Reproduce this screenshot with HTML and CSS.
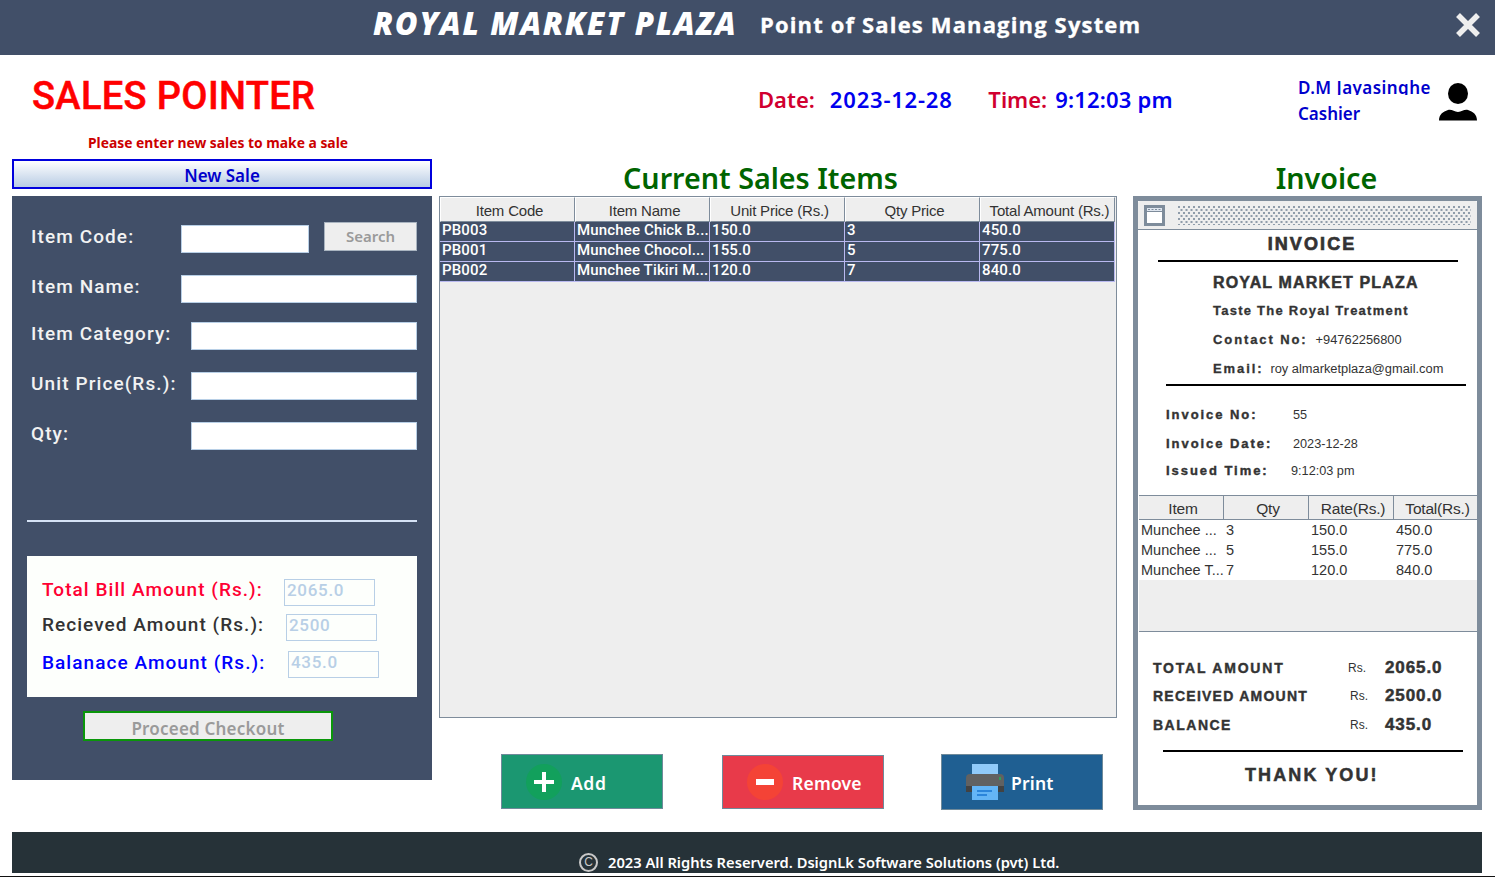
FILE: index.html
```html
<!DOCTYPE html>
<html lang="en">
<head>
<meta charset="utf-8">
<title>Royal Market Plaza</title>
<link rel="stylesheet" href="styles.css">
</head>
<body>
<div class="app">
  <header class="titlebar">
    <span class="brand">ROYAL MARKET PLAZA</span>
    <span class="subtitle">Point of Sales Managing System</span>
    <svg class="close" width="26" height="26" viewBox="0 0 26 26"><path d="M3 3L23 23M23 3L3 23" stroke="#eeeeee" stroke-width="5.5" fill="none"/></svg>
  </header>

  <section class="topbar">
    <h1 class="page-title">SALES POINTER</h1>
    <div class="clock">
      <span class="clock-label">Date:</span><span class="clock-date">2023-12-28</span>
      <span class="clock-label clock-time-label">Time:</span><span class="clock-time">9:12:03 pm</span>
    </div>
    <div class="user">
      <div class="user-text">
        <div class="user-name">D.M Jayasinghe</div>
        <div class="user-role">Cashier</div>
      </div>
      <svg class="user-icon" width="40" height="40" viewBox="0 0 40 40"><ellipse cx="20" cy="11.500" rx="10" ry="10.500" fill="#000"/><path d="M1 38.500c0-6 4-9 9-10.500 4-1 6 2 10 2s6-3 10-2c5 1.500 9 4.500 9 10.500z" fill="#000"/></svg>
    </div>
  </section>

  <main class="workspace">
    <section class="left">
      <p class="prompt">Please enter new sales to make a sale</p>
      <button class="new-sale">New Sale</button>
      <div class="panel">
        <div class="row row-code"><label class="lbl lbl-short">Item Code:</label><span class="field field-code"></span><button class="search">Search</button></div>
        <div class="row row-name"><label class="lbl lbl-short">Item Name:</label><span class="field field-grow"></span></div>
        <div class="row row-cat"><label class="lbl lbl-long">Item Category:</label><span class="field field-grow"></span></div>
        <div class="row row-price"><label class="lbl lbl-long">Unit Price(Rs.):</label><span class="field field-grow"></span></div>
        <div class="row row-qty"><label class="lbl lbl-long">Qty:</label><span class="field field-grow"></span></div>
        <hr class="divider">
        <div class="totals">
          <div class="total total-bill"><span class="total-lbl red">Total Bill Amount (Rs.):</span><span class="total-val">2065.0</span></div>
          <div class="total total-recv"><span class="total-lbl dark">Recieved Amount (Rs.):</span><span class="total-val">2500</span></div>
          <div class="total total-bal"><span class="total-lbl blue">Balanace Amount (Rs.):</span><span class="total-val">435.0</span></div>
        </div>
        <button class="checkout">Proceed Checkout</button>
      </div>
    </section>

    <section class="center">
      <h2 class="heading">Current Sales Items</h2>
      <div class="table-box">
        <table class="sales">
          <thead><tr><th>Item Code</th><th>Item Name</th><th>Unit Price (Rs.)</th><th>Qty Price</th><th>Total Amount (Rs.)</th></tr></thead>
          <tbody>
            <tr><td>PB003</td><td>Munchee Chick B...</td><td>150.0</td><td>3</td><td>450.0</td></tr>
            <tr><td>PB001</td><td>Munchee Chocol...</td><td>155.0</td><td>5</td><td>775.0</td></tr>
            <tr><td>PB002</td><td>Munchee Tikiri M...</td><td>120.0</td><td>7</td><td>840.0</td></tr>
          </tbody>
        </table>
      </div>
      <div class="actions">
        <button class="action add">
          <svg width="36" height="36" viewBox="0 0 36 36"><circle cx="18" cy="18" r="18" fill="#12a05c"/><path d="M18 8V28M8 18H28" stroke="#fff" stroke-width="4"/></svg>
          <span>Add</span>
        </button>
        <button class="action remove">
          <svg width="36" height="36" viewBox="0 0 36 36"><circle cx="18" cy="18" r="18" fill="#f44336"/><rect x="9" y="15" width="18" height="6" fill="#fff"/></svg>
          <span>Remove</span>
        </button>
        <button class="action print">
          <svg width="38" height="36" viewBox="0 0 38 36"><rect x="6" y="0" width="26" height="12" fill="#90caf9"/><path d="M0 14a4 4 0 0 1 4-4h30a4 4 0 0 1 4 4v14H0z" fill="#616161"/><rect x="0" y="22" width="38" height="6" fill="#424242"/><rect x="33" y="13" width="2" height="3" fill="#2e9e5b"/><rect x="6" y="22" width="26" height="14" fill="#64b5f6"/><path d="M11 27H26M11 31H21" stroke="#1976d2" stroke-width="1.500"/></svg>
          <span>Print</span>
        </button>
      </div>
    </section>

    <section class="right">
      <h2 class="heading">Invoice</h2>
      <div class="invoice">
        <div class="win-bar">
          <svg class="win-icon" width="21" height="21" viewBox="0 0 21 21"><rect x="1.500" y="1.500" width="18" height="18" fill="#fff" stroke="#7e8c9b" stroke-width="3"/><rect x="3" y="3" width="15" height="3" fill="#dfe6ef"/><path d="M4 4.500H17" stroke="#7e8c9b" stroke-width="1" stroke-dasharray="2 1.500"/><path d="M3 6.500H18" stroke="#7e8c9b" stroke-width="1"/></svg>
          <div class="win-dots"></div>
        </div>
        <div class="inv-title">INVOICE</div>
        <div class="rule rule-a"></div>
        <div class="shop">
          <div class="shop-name">ROYAL MARKET PLAZA</div>
          <div class="shop-line tagline"><b>Taste The Royal Treatment</b></div>
          <div class="shop-line contact"><b>Contact No:</b><span>+94762256800</span></div>
          <div class="shop-line email"><b>Email:</b><span>roy almarketplaza@gmail.com</span></div>
        </div>
        <div class="rule rule-b"></div>
        <div class="meta">
          <div class="meta-row meta-no"><b>Invoice No:</b><span>55</span></div>
          <div class="meta-row meta-date"><b>Invoice Date:</b><span>2023-12-28</span></div>
          <div class="meta-row meta-time"><b>Issued Time:</b><span class="nudge">9:12:03 pm</span></div>
        </div>
        <div class="inv-table-box">
          <table class="inv-items">
            <thead><tr><th>Item</th><th>Qty</th><th>Rate(Rs.)</th><th class="last">Total(Rs.)</th></tr></thead>
            <tbody>
              <tr><td>Munchee ...</td><td>3</td><td>150.0</td><td>450.0</td></tr>
              <tr><td>Munchee ...</td><td>5</td><td>155.0</td><td>775.0</td></tr>
              <tr><td>Munchee T...</td><td>7</td><td>120.0</td><td>840.0</td></tr>
            </tbody>
          </table>
        </div>
        <div class="sums">
          <div class="sum sum-1"><b>TOTAL AMOUNT</b><span class="rs">Rs.</span><strong>2065.0</strong></div>
          <div class="sum sum-2"><b>RECEIVED AMOUNT</b><span class="rs rs-shift">Rs.</span><strong>2500.0</strong></div>
          <div class="sum sum-3"><b>BALANCE</b><span class="rs rs-shift">Rs.</span><strong>435.0</strong></div>
        </div>
        <div class="rule rule-c"></div>
        <div class="thanks">THANK YOU!</div>
      </div>
    </section>
  </main>

  <footer class="footer">
    <span class="copy-mark">C</span>
    <span class="copy-text">2023 All Rights Reserverd. DsignLk Software Solutions (pvt) Ltd.</span>
  </footer>
  <div class="bottom-line"></div>
</div>
</body>
</html>
```
FILE: styles.css
```css
* { box-sizing: border-box; }
html, body { margin: 0; padding: 0; background: #fff; }
body { width: 1495px; height: 877px; overflow: hidden; font-family: "Roboto", "Liberation Sans", sans-serif; }
.app { width: 1495px; height: 877px; display: flex; flex-direction: column; }
button { font-family: inherit; padding: 0; margin: 0; }
h1, h2, p { margin: 0; }

.titlebar { position: relative; height: 55px; background: #414f68; color: #fff; display: flex; align-items: center; padding-left: 373px; }
.brand { font: italic 800 31px/1 "Open Sans", sans-serif; letter-spacing: 1.7px; margin-top: -9px; white-space: nowrap; width: 387px; flex: none; }
.subtitle { font: 700 22px/1 "Open Sans", sans-serif; letter-spacing: 1.15px; margin-top: -7px; white-space: nowrap; -webkit-text-stroke: .3px #fff; }
.close { position: absolute; left: 1455px; top: 12px; }

.topbar { height: 79px; display: flex; flex: none; }
.page-title { margin-left: 32px; margin-top: 19px; width: 726px; font: 500 38px/44px "Roboto", sans-serif; letter-spacing: .35px; color: #ff0000; height: 44px; white-space: nowrap; -webkit-text-stroke: .5px #ff0000; }
.clock { margin-top: 29px; width: 540px; font: 600 22px/30px "Noto Sans", sans-serif; white-space: nowrap; }
.clock-label { color: #d1002f; }
.clock-date { color: #0000ee; margin-left: 15px; letter-spacing: .8px; }
.clock-time-label { margin-left: 30px; }
.clock-time { color: #0000ee; margin-left: 8px; letter-spacing: .2px; }
.user { display: flex; }
.user-text { width: 140px; margin-top: 22px; color: #0000cc; font: 600 17px/24px "Noto Sans", sans-serif; }
.user-name { height: 18px; line-height: 21px; overflow: hidden; white-space: nowrap; letter-spacing: .45px; }
.user-role { margin-top: 7px; }
.user-icon { margin-top: 27px; }

.workspace { height: 698px; display: grid; grid-template-columns: 420px 678px 349px; column-gap: 0; padding-left: 12px; flex: none; }
.left { width: 420px; }
.prompt { height: 25px; padding-left: 76px; font: 700 13.850px/18px "Noto Sans", sans-serif; color: #cc0000; white-space: nowrap; }
.new-sale { display: block; width: 420px; height: 30px; border: 2px solid #0000dd; background: linear-gradient(#ffffff, #b8cce4); color: #0000cc; font: 600 17px/22px "Noto Sans", sans-serif; padding-top: 3px; }
.panel { margin-top: 7px; height: 584px; background: #414f68; padding: 0 15px; display: flex; flex-direction: column; }
.row { display: flex; align-items: center; height: 28px; padding-left: 4px; flex: none; }
.row-code { margin-top: 29px; }
.row-name { margin-top: 22px; }
.row-cat { margin-top: 19px; }
.row-price { margin-top: 22px; }
.row-qty { margin-top: 22px; }
.lbl { color: #f2f2f2; font: 500 19px/1 "Roboto", sans-serif; letter-spacing: 1.1px; white-space: nowrap; position: relative; top: -3px; }
.lbl-short { width: 150px; }
.lbl-long { width: 160px; }
.field { display: block; height: 28px; background: #fff; border: 1px solid #b8cfe6; }
.field-code { width: 128px; }
.field-grow { flex: 1; }
.search { width: 93px; height: 29px; margin-left: 15px; background: #eeeeee; border: 1px solid #a9b4c0; color: #9a9a9a; font: 600 15px/1 "Noto Sans", sans-serif; position: relative; top: -3px; }
.divider { margin: 70px 0 0; border: 0; height: 2px; background: #d5e2f5; flex: none; }
.totals { margin-top: 34px; height: 141px; background: #fdfffc; padding: 23px 0 0 15px; flex: none; }
.total { display: flex; align-items: center; height: 27px; }
.total-recv { margin-top: 8px; }
.total-bal { margin-top: 10px; }
.total-lbl { font: 500 19px/1 "Roboto", sans-serif; letter-spacing: 1.05px; white-space: nowrap; position: relative; top: -3px; }
.total-bal .total-lbl { top: -2px; }
.total-bill .total-lbl { width: 242px; }
.total-recv .total-lbl { width: 244px; }
.total-bal .total-lbl { width: 246px; }
.red { color: #ff0033; }
.dark { color: #333333; }
.blue { color: #0000ff; }
.total-val { width: 91px; height: 27px; border: 1px solid #b8cfe6; color: #b8cfe6; font: 500 17px/21px "Roboto", sans-serif; letter-spacing: .7px; padding-left: 2px; }
.checkout { display: block; margin: 14px 0 0 56px; width: 250px; height: 30px; background: #eeeeee; border: 2px solid #0a960a; color: #9a9a9a; font: 600 17px/20px "Noto Sans", sans-serif; letter-spacing: .2px; padding-top: 6px; flex: none; }

.center { padding-left: 7px; width: 678px; display: flex; flex-direction: column; }
.heading { height: 62px; padding-top: 24px; text-align: center; color: #006400; font: 600 28.700px/40px "Noto Sans", sans-serif; }
.center .heading { padding-right: 28px; }
.right .heading { padding-left: 38px; }
.table-box { width: 678px; height: 522px; background: #eeeeee; border: 1px solid #7e8c9b; }
.sales { border-collapse: separate; border-spacing: 0; table-layout: fixed; width: 675px; }
.sales th { width: 135px; height: 25px; background: #eeeeee; border-right: 1px solid #7e8c9b; border-bottom: 1px solid #7e8c9b; border-left: 1px solid #fff; border-top: 1px solid #fff; font: 400 15px/1 "Liberation Sans", sans-serif; letter-spacing: -.2px; color: #333; padding: 1px 0 0 4px; white-space: nowrap; }
.sales td { height: 20px; background: #414f68; color: #fff; font: 500 15px/1 "Roboto", sans-serif; letter-spacing: .15px; padding: 0 0 3px 2px; border-right: 1px solid #b9b9f0; border-bottom: 1px solid #b9b9f0; white-space: nowrap; overflow: hidden; }
.actions { display: flex; align-items: flex-start; margin-top: 36px; margin-left: 62px; }
.action { width: 162px; height: 55px; display: flex; align-items: center; border: 1px solid #6f8a9a; color: #fff; font: 600 17.500px/1 "Noto Sans", sans-serif; gap: 9px; padding-left: 24px; flex: none; }
.action span { letter-spacing: .2px; margin-top: 4px; }
.add { background: #1b9771; }
.add span { letter-spacing: .6px; }
.remove { background: #e83a4a; margin-left: 59px; margin-top: 1px; height: 54px; }
.print { background: #1f5f92; margin-left: 57px; height: 56px; gap: 7px; }

.right { width: 349px; margin-left: 1px; padding-left: 22px; box-sizing: content-box; }
.invoice { width: 349px; height: 614px; border: 5px solid #7e8c9b; background: #fff; font-family: "Liberation Sans", sans-serif; color: #333; display: flex; flex-direction: column; }
.win-bar { height: 29px; flex: none; background: #eeeeee; border-bottom: 1px solid #7e8c9b; border-radius: 2px 2px 0 0; display: flex; align-items: center; padding: 0 6px; }
.win-icon { flex: none; }
.win-dots { margin-left: 13px; flex: 1; height: 19px; background-image: radial-gradient(circle at 1px 1px, #8f9caa 1px, transparent 1.300px), radial-gradient(circle at 1px 1px, #8f9caa 1px, transparent 1.300px); background-size: 5px 6px; background-position: 0 0, 2.500px 3px; }
.inv-title { height: 30px; text-align: center; margin-left: 9px; font: 700 18px/28px "Liberation Sans", sans-serif; letter-spacing: 2.1px; -webkit-text-stroke: .7px #333; }
.rule { height: 2px; background: #000; flex: none; }
.rule-a { width: 300px; margin-left: 20px; }
.shop { height: 122px; padding-left: 75px; flex: none; }
.shop-name { margin-top: 8px; height: 26px; font: 700 16px/26px "Liberation Sans", sans-serif; letter-spacing: 1.15px; -webkit-text-stroke: .5px #333; white-space: nowrap; }
.shop-line { height: 29px; line-height: 29px; font-size: 12.850px; white-space: nowrap; }
.shop-line b { font-size: 13px; letter-spacing: 1.25px; -webkit-text-stroke: .3px #333; }
.contact b, .email b { letter-spacing: 1.9px; }
.contact span { margin-left: 8px; }
.email span { margin-left: 7px; }
.rule-b { width: 300px; margin-left: 28px; }
.meta { height: 109px; padding-left: 28px; padding-top: 15px; flex: none; }
.meta-row { display: flex; height: 28px; line-height: 28px; font-size: 12.700px; }
.meta-date { margin-top: 1px; margin-bottom: -1px; }
.meta-row b { width: 127px; font-size: 13px; letter-spacing: 1.95px; -webkit-text-stroke: .4px #333; white-space: nowrap; }
.nudge { margin-left: -2px; }
.inv-table-box { margin-left: 1px; height: 137px; background: #eeeeee; border-bottom: 1px solid #7e8c9b; flex: none; }
.inv-items { border-collapse: separate; border-spacing: 0; table-layout: fixed; width: 338px; }
.inv-items th { height: 25px; background: #eeeeee; width: 85px; border-top: 1px solid #7e8c9b; border-right: 1px solid #7e8c9b; border-bottom: 1px solid #7e8c9b; font: 400 15.500px/1 "Liberation Sans", sans-serif; letter-spacing: -.2px; color: #333; padding: 2px 0 0 4px; white-space: nowrap; }
.inv-items th.last { width: 83px; border-right: 0; }
.inv-items td { height: 20px; background: #fff; font: 400 14.500px/1 "Liberation Sans", sans-serif; color: #333; padding: 0 0 0 2px; white-space: nowrap; overflow: hidden; }
.sums { height: 118px; padding-left: 15px; padding-top: 22px; flex: none; }
.sum { display: flex; align-items: center; height: 28px; }
.sum-3 { margin-top: 1px; }
.sum b { width: 195px; font-size: 14px; letter-spacing: 1.500px; -webkit-text-stroke: .4px #333; white-space: nowrap; }
.sum-1 b { letter-spacing: 1.800px; }
.sum-2 b { letter-spacing: 1.250px; }
.rs { font-size: 12px; width: 37px; }
.rs-shift { margin-left: 2px; width: 35px; }
.sum strong { font-size: 17px; letter-spacing: .9px; -webkit-text-stroke: .5px #333; }
.rule-c { width: 300px; margin-left: 25px; }
.thanks { height: 47px; padding-left: 107px; font: 700 18px/47px "Liberation Sans", sans-serif; letter-spacing: 2.1px; -webkit-text-stroke: .5px #333; white-space: nowrap; }

.footer { margin: 0 0 0 12px; width: 1470px; height: 41px; background: #263238; color: #fff; display: flex; align-items: flex-start; padding: 20px 0 0 567px; flex: none; }
.copy-mark { width: 19px; height: 19px; margin-top: 1px; border: 2px solid #c9c9c9; border-radius: 50%; color: #c9c9c9; font: 400 12px/15px "Liberation Sans", sans-serif; text-align: center; flex: none; }
.copy-text { margin-left: 10px; font: 600 14.700px/20px "Noto Sans", sans-serif; white-space: nowrap; }
.bottom-line { margin-top: 3px; height: 1px; background: #111; flex: none; }
```
